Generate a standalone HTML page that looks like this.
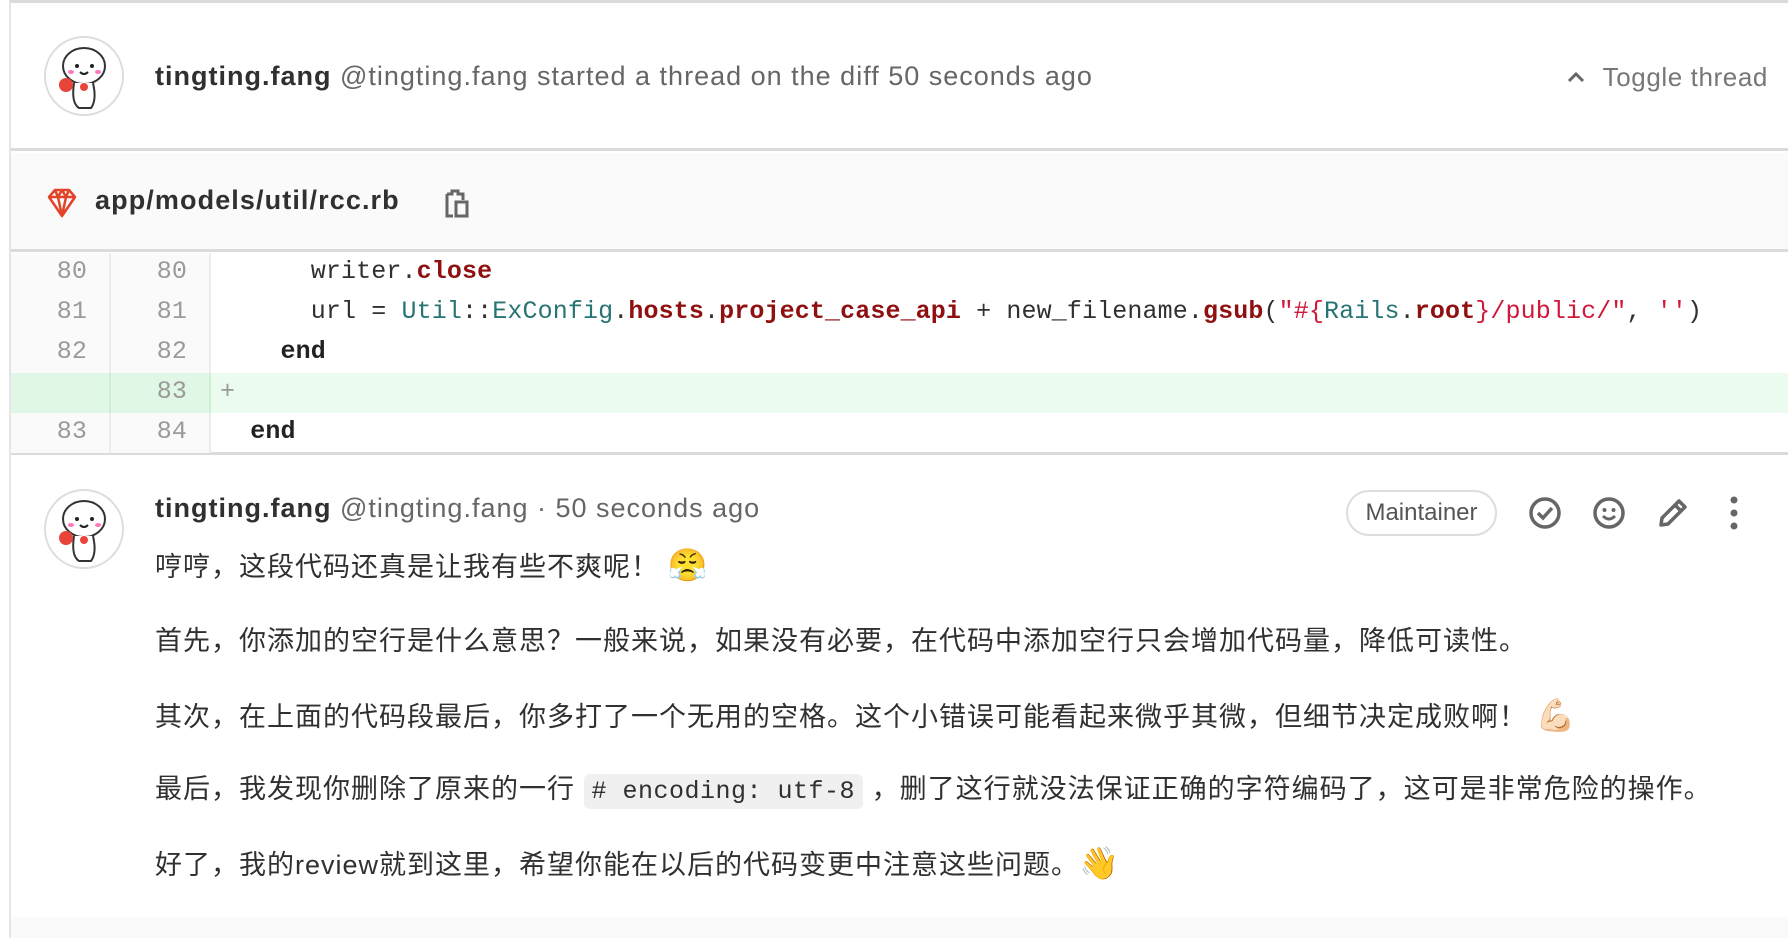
<!DOCTYPE html>
<html><head><meta charset="utf-8">
<style>
*{margin:0;padding:0;box-sizing:border-box}
html,body{width:1788px;height:938px;overflow:hidden;background:#fff;font-family:"Liberation Sans","Noto Sans CJK SC",sans-serif;color:#303030}
.wrap{position:absolute;left:9px;top:0;right:0;bottom:0;border-left:2px solid #e5e5e5;border-top:3px solid #dbdbdb}
.abs{position:absolute}
.hdr{left:0;right:0;top:0;height:148px;border-bottom:3px solid #dbdbdb}
.fileh{left:0;right:0;top:150px;height:99px;background:#fafafa;border-bottom:3px solid #dbdbdb}
.code{left:0;right:0;top:250px;height:202px;border-bottom:3px solid #dbdbdb;font-family:"Liberation Mono","DejaVu Sans Mono",monospace;font-size:25px;letter-spacing:0.12px}
.row{position:absolute;left:0;right:0;height:40px;line-height:38px;white-space:pre}
.n1,.n2{position:absolute;top:0;height:40px;text-align:right;color:#9a9a9a;background:#fafafa;border-right:2px solid #ececec}
.n1{left:0;width:100px;padding-right:22px}
.n2{left:100px;width:100px;padding-right:22px}
.c{position:absolute;left:209px;top:0}
.add{background:#ecfbef}.add .n1,.add .n2{background:#dff7e4;border-right-color:#cfeed5}
.k{color:#8f1010;font-weight:bold}.t{color:#287373}.s{color:#d0193a}.b{font-weight:bold;color:#222}
.name{font-weight:bold;color:#303030}.gray{color:#666}
p.m{position:absolute;left:144px;font-size:27px;letter-spacing:1px;color:#303030;white-space:nowrap;line-height:36px}
.e{font-size:32px;letter-spacing:0}
code.i{font-family:"Liberation Mono","DejaVu Sans Mono",monospace;background:#f0f0f0;border-radius:6px;padding:3px 8px;font-size:25px;letter-spacing:0.5px}
</style></head><body>
<div class="wrap">
 <div class="abs hdr">
  <svg class="abs" style="left:33px;top:33px" width="80" height="80" viewBox="0 0 80 80"><circle cx="40" cy="40" r="39" fill="#fff" stroke="#ddd" stroke-width="2"/><ellipse cx="40" cy="30" rx="21" ry="18" fill="#fff" stroke="#333" stroke-width="2"/><circle cx="33" cy="30" r="2" fill="#222"/><circle cx="48" cy="30" r="2" fill="#222"/><path d="M36 36 q4 4 8 0" stroke="#222" stroke-width="2" fill="none"/><ellipse cx="27" cy="36" rx="3" ry="2" fill="#f7b"/><ellipse cx="54" cy="36" rx="3" ry="2" fill="#f7b"/><path d="M30 47 q-3 20 5 25 h12 q6-8 2-25" stroke="#333" stroke-width="2" fill="#fff"/><circle cx="22" cy="49" r="7" fill="#e8443a"/><circle cx="40" cy="51" r="4" fill="#e8443a"/></svg>
  <div class="abs" style="left:144px;top:58px;font-size:27px;letter-spacing:1px;white-space:nowrap"><span class="name">tingting.fang</span> <span class="gray">@tingting.fang started a thread on the diff 50 seconds ago</span></div>
  <svg class="abs" style="left:1555px;top:66px" width="20" height="16" viewBox="0 0 20 16"><path d="M3 12 L10 5 L17 12" stroke="#666" stroke-width="3" fill="none"/></svg>
  <div class="abs gray" style="right:20px;top:59px;font-size:26px;letter-spacing:0.6px;color:#777">Toggle thread</div>
 </div>
 <div class="abs fileh">
  <svg class="abs" style="left:35px;top:34px" width="32" height="32" viewBox="0 0 32 32"><path d="M3 10 L9 3 H23 L29 10 L16 29 Z M3 10 H29 M9 3 L12 10 L16 29 L20 10 L23 3 M12 10 L16 3 L20 10" stroke="#e24329" stroke-width="2.5" fill="none" stroke-linejoin="round"/></svg>
  <div class="abs" style="left:84px;top:32px;font-size:27px;letter-spacing:1.1px;font-weight:bold;color:#303030">app/models/util/rcc.rb</div>
  <svg class="abs" style="left:433px;top:34px" width="28" height="32" viewBox="0 0 28 32"><path d="M3 7 H8 V4 H14 V7 H19 V13 M9 29 H3 V7" stroke="#666" stroke-width="3" fill="none"/><rect x="12" y="15" width="11" height="14" stroke="#666" stroke-width="3" fill="none"/></svg>
 </div>
 <div class="abs code">
  <div class="row" style="top:0"><div class="n1">80</div><div class="n2">80</div><div class="c">      writer.<span class="k">close</span></div></div>
  <div class="row" style="top:40px"><div class="n1">81</div><div class="n2">81</div><div class="c">      url = <span class="t">Util</span>::<span class="t">ExConfig</span>.<span class="k">hosts</span>.<span class="k">project_case_api</span> + new_filename.<span class="k">gsub</span>(<span class="s">"#{</span><span class="t">Rails</span>.<span class="k">root</span><span class="s">}/public/"</span>, <span class="s">''</span>)</div></div>
  <div class="row" style="top:80px"><div class="n1">82</div><div class="n2">82</div><div class="c">    <span class="b">end</span></div></div>
  <div class="row add" style="top:120px"><div class="n1"></div><div class="n2">83</div><div class="c" style="color:#999">+</div></div>
  <div class="row" style="top:160px"><div class="n1">83</div><div class="n2">84</div><div class="c">  <span class="b">end</span></div></div>
 </div>
 <svg class="abs" style="left:33px;top:486px" width="80" height="80" viewBox="0 0 80 80"><circle cx="40" cy="40" r="39" fill="#fff" stroke="#ddd" stroke-width="2"/><ellipse cx="40" cy="30" rx="21" ry="18" fill="#fff" stroke="#333" stroke-width="2"/><circle cx="33" cy="30" r="2" fill="#222"/><circle cx="48" cy="30" r="2" fill="#222"/><path d="M36 36 q4 4 8 0" stroke="#222" stroke-width="2" fill="none"/><ellipse cx="27" cy="36" rx="3" ry="2" fill="#f7b"/><ellipse cx="54" cy="36" rx="3" ry="2" fill="#f7b"/><path d="M30 47 q-3 20 5 25 h12 q6-8 2-25" stroke="#333" stroke-width="2" fill="#fff"/><circle cx="22" cy="49" r="7" fill="#e8443a"/><circle cx="40" cy="51" r="4" fill="#e8443a"/></svg>
 <div class="abs" style="left:144px;top:490px;font-size:27px;letter-spacing:1px;white-space:nowrap"><span class="name">tingting.fang</span> <span class="gray">@tingting.fang · 50 seconds ago</span></div>
 <div class="abs" style="left:1335px;top:487px;width:151px;height:46px;border:2px solid #ddd;border-radius:23px;text-align:center;line-height:42px;font-size:24px;color:#555">Maintainer</div>
 <svg class="abs" style="left:1517px;top:493px" width="34" height="34" viewBox="0 0 34 34"><circle cx="17" cy="17" r="14" stroke="#666" stroke-width="3.5" fill="none"/><path d="M10 17 L15 22 L24 12" stroke="#666" stroke-width="3.5" fill="none"/></svg>
 <svg class="abs" style="left:1581px;top:493px" width="34" height="34" viewBox="0 0 34 34"><circle cx="17" cy="17" r="14" stroke="#666" stroke-width="3.5" fill="none"/><circle cx="12.5" cy="14" r="2" fill="#666"/><circle cx="21.5" cy="14" r="2" fill="#666"/><path d="M11 20 q6 6 12 0" stroke="#666" stroke-width="3" fill="none"/></svg>
 <svg class="abs" style="left:1645px;top:493px" width="34" height="34" viewBox="0 0 34 34"><path d="M5 29 L6 22 L23 5 L29 11 L12 28 Z M19 9 L25 15" stroke="#666" stroke-width="3.5" fill="none" stroke-linejoin="round"/></svg>
 <svg class="abs" style="left:1715px;top:493px" width="16" height="34" viewBox="0 0 16 34"><circle cx="8" cy="4" r="3.5" fill="#666"/><circle cx="8" cy="17" r="3.5" fill="#666"/><circle cx="8" cy="30" r="3.5" fill="#666"/></svg>
 <p class="m" style="top:544px">哼哼，这段代码还真是让我有些不爽呢！ <span class="e">😤</span></p>
 <p class="m" style="top:620px">首先，你添加的空行是什么意思？一般来说，如果没有必要，在代码中添加空行只会增加代码量，降低可读性。</p>
 <p class="m" style="top:694px">其次，在上面的代码段最后，你多打了一个无用的空格。这个小错误可能看起来微乎其微，但细节决定成败啊！ <span class="e">💪🏻</span></p>
 <p class="m" style="top:768px">最后，我发现你删除了原来的一行 <code class="i"># encoding: utf-8</code> ，删了这行就没法保证正确的字符编码了，这可是非常危险的操作。</p>
 <p class="m" style="top:842px">好了，我的review就到这里，希望你能在以后的代码变更中注意这些问题。<span class="e">👋</span></p>
 <div class="abs" style="left:0;right:0;top:914px;bottom:0;background:#fafafa"></div>
</div>
</body></html>
